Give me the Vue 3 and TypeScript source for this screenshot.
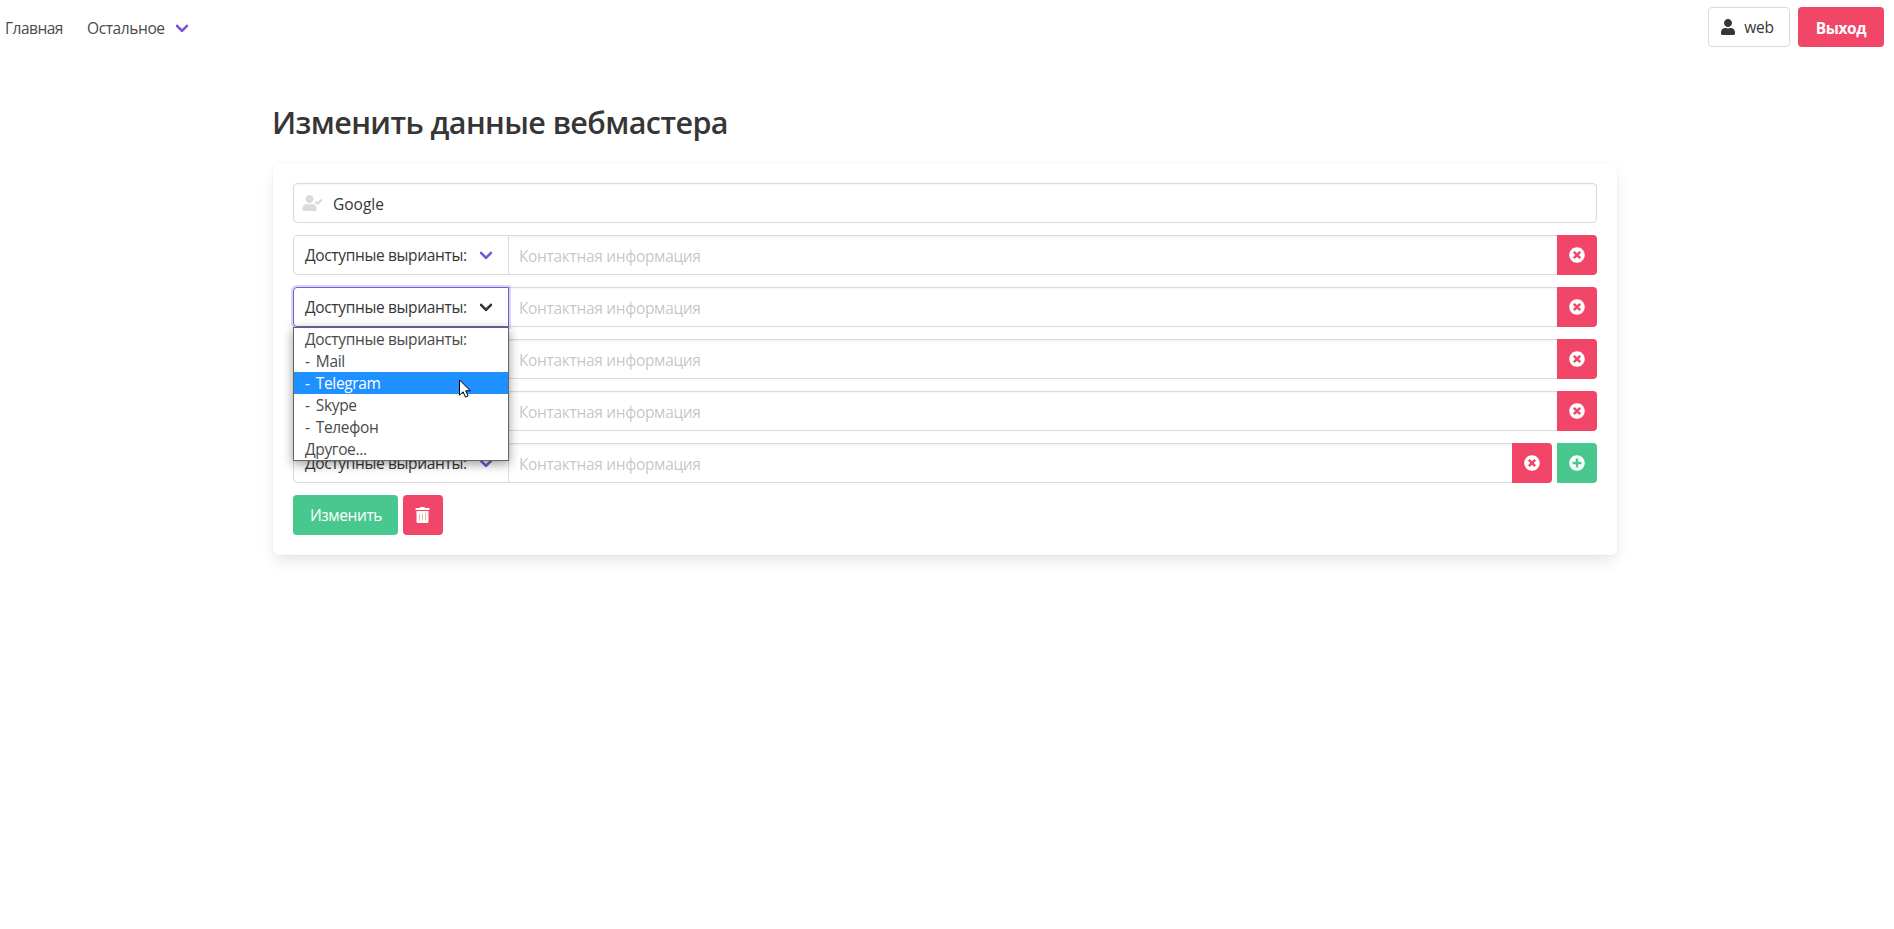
<script setup lang="ts">
import { ref } from 'vue'

interface ContactRow {
  id: number
  value: string
}

const icons = {
  user: 'M224 256c70.7 0 128-57.3 128-128S294.7 0 224 0 96 57.3 96 128s57.3 128 128 128zm89.6 32h-16.7c-22.2 10.2-46.9 16-72.9 16s-50.6-5.8-72.9-16h-16.7C60.2 288 0 348.2 0 422.4V464c0 26.5 21.5 48 48 48h352c26.5 0 48-21.5 48-48v-41.6c0-74.2-60.2-134.4-134.4-134.4z',
  check: 'M636.6 159.6l-27.8-28.1c-4.6-4.7-12.1-4.7-16.8-.1l-104.8 104-45.5-45.8c-4.6-4.7-12.1-4.7-16.8-.1l-28.1 27.9c-4.7 4.6-4.7 12.1-.1 16.8l81.7 82.3c4.6 4.7 12.1 4.7 16.8.1l141.3-140.2c4.6-4.7 4.7-12.2.1-16.8z',
  remove: 'M256 8C119 8 8 119 8 256s111 248 248 248 248-111 248-248S393 8 256 8zm121.6 313.1c4.7 4.7 4.7 12.3 0 17L338 377.6c-4.7 4.7-12.3 4.7-17 0L256 312l-65.1 65.6c-4.7 4.7-12.3 4.7-17 0L134.4 338c-4.7-4.7-4.7-12.3 0-17l65.6-65-65.6-65.1c-4.7-4.7-4.7-12.3 0-17l39.6-39.6c4.7-4.7 12.3-4.7 17 0l65 65.7 65.1-65.6c4.7-4.7 12.3-4.7 17 0l39.6 39.6c4.7 4.7 4.7 12.3 0 17L312 256l65.6 65.1z',
  add: 'M256 8C119 8 8 119 8 256s111 248 248 248 248-111 248-248S393 8 256 8zm144 276c0 6.6-5.4 12-12 12h-92v92c0 6.6-5.4 12-12 12h-56c-6.6 0-12-5.4-12-12v-92h-92c-6.6 0-12-5.4-12-12v-56c0-6.6 5.4-12 12-12h92v-92c0-6.6 5.4-12 12-12h56c6.6 0 12 5.4 12 12v92h92c6.6 0 12 5.4 12 12v56z',
  trash: 'M32 464a48 48 0 0 0 48 48h288a48 48 0 0 0 48-48V128H32zM432 32H312l-9.4-18.7A24 24 0 0 0 281.1 0H166.8a23.72 23.72 0 0 0-21.4 13.3L136 32H16A16 16 0 0 0 0 48v32a16 16 0 0 0 16 16h416a16 16 0 0 0 16-16V48a16 16 0 0 0-16-16z',
  slots: 'M128 208v224M224 208v224M320 208v224',
}

const name = ref('Google')
const options: string[] = ['Доступные вырианты:', '- Mail', '- Telegram', '- Skype', '- Телефон', 'Другое...']
const activeOption = ref(2)
const openRow = ref(1)
const rows = ref<ContactRow[]>([1, 2, 3, 4, 5].map((id) => ({ id, value: '' })))

function addRow() {
  rows.value.push({ id: Math.max(0, ...rows.value.map((r) => r.id)) + 1, value: '' })
}

function removeRow(index: number) {
  rows.value.splice(index, 1)
}
</script>

<template>
  <div class="page">
    <nav class="navbar">
      <a class="nav-link home">Главная</a>
      <a class="nav-link more">
        <span>Остальное</span>
        <i class="chevron"></i>
      </a>
      <div class="nav-end">
        <button class="button account">
          <svg class="user-icon" viewBox="0 0 448 512"><path :d="icons.user" /></svg>
          <span>web</span>
        </button>
        <button class="button danger logout"><span>Выход</span></button>
      </div>
    </nav>

    <main class="container">
      <h1 class="title">Изменить данные вебмастера</h1>
      <form class="box" @submit.prevent>
        <div class="name-field">
          <svg class="name-icon" viewBox="0 0 640 512">
            <path :d="icons.user" />
            <path :d="icons.check" />
          </svg>
          <input v-model="name" class="input" type="text" />
        </div>

        <div v-for="(row, index) in rows" :key="row.id" class="row">
          <div class="select" :class="{ open: index === openRow }" @click="openRow = index">
            <span class="select-text">{{ options[0] }}</span>
            <i class="chevron"></i>
            <ul v-if="index === openRow" class="menu">
              <li
                v-for="(option, i) in options"
                :key="option"
                :class="{ active: i === activeOption, nested: option.startsWith('-') }"
                @mouseenter="activeOption = i"
              >
                <span>{{ option }}</span>
              </li>
              <svg class="pointer" viewBox="0 0 12 19">
                <path d="M.5.9v15.3l3.6-3.4 2.4 5.3 2.6-1.1-2.4-5.2h4.6z" />
              </svg>
            </ul>
          </div>
          <input v-model="row.value" class="input contact" type="text" placeholder="Контактная информация" />
          <button class="button danger square joined" type="button" @click="removeRow(index)">
            <svg class="round-icon" viewBox="0 0 512 512"><path :d="icons.remove" /></svg>
          </button>
          <button
            v-if="index === rows.length - 1"
            class="button success square joined add"
            type="button"
            @click="addRow"
          >
            <svg class="round-icon" viewBox="0 0 512 512"><path :d="icons.add" /></svg>
          </button>
        </div>

        <div class="actions">
          <button class="button success submit"><span>Изменить</span></button>
          <button class="button danger square" type="button">
            <svg class="trash-icon" viewBox="0 0 448 512">
              <path :d="icons.trash" />
              <path class="slots" :d="icons.slots" />
            </svg>
          </button>
        </div>
      </form>
    </main>
  </div>
</template>

<style>
html,
body {
  margin: 0;
  background: #fff;
  overflow: hidden;
}
</style>

<style scoped>
* {
  box-sizing: border-box;
}

.page,
.input,
.button {
  font-family: 'Open Sans', 'Noto Sans', sans-serif;
  font-size: 15.5px;
  font-weight: 400;
  line-height: 24px;
}

.page {
  min-height: 929px;
  color: #4a4a4a;
}

.navbar {
  display: flex;
  align-items: center;
  height: 54px;
  padding: 0 10px 0 5px;
}

.nav-link {
  display: flex;
  align-items: center;
  padding-top: 1px;
  white-space: nowrap;
}

.home {
  width: 82px;
  letter-spacing: -0.5px;
}

.more {
  letter-spacing: -0.4px;
}

.more .chevron {
  margin-left: 12px;
}

.nav-end {
  display: flex;
  gap: 8px;
  margin-left: auto;
}

.chevron {
  flex: none;
  width: 10px;
  height: 10px;
  border: 3px solid #7957d5;
  border-top: 0;
  border-right: 0;
  border-radius: 2px;
  transform: translateY(-2px) rotate(-45deg);
}

.button {
  display: flex;
  flex: none;
  align-items: center;
  justify-content: center;
  height: 40px;
  padding: 0;
  border: 0;
  border-radius: 4px;
  color: #fff;
}

.button svg {
  fill: currentColor;
}

.account {
  gap: 9px;
  width: 82px;
  padding-right: 3px;
  border: 1px solid #dbdbdb;
  background: #fff;
  color: #363636;
  letter-spacing: -0.2px;
}

.user-icon {
  width: 14px;
  height: 16px;
}

.logout {
  width: 86px;
  padding-top: 1px;
  font-weight: 700;
  letter-spacing: -0.4px;
}

.danger {
  background: #f14668;
}

.success {
  background: #48c78e;
}

.square {
  width: 40px;
  padding-right: 1px;
}

.joined {
  border-radius: 0 4px 4px 0;
}

.add {
  margin-left: 5px;
}

.round-icon {
  width: 16px;
  height: 16px;
}

.trash-icon {
  width: 15px;
  height: 16px;
}

.trash-icon .slots {
  stroke: #f9b4a8;
  stroke-width: 32;
}

.container {
  width: 1344px;
  margin: 0 auto;
  transform: translateX(-2px);
}

.title {
  height: 36px;
  margin: 50px 0 23px;
  color: #363636;
  font-size: 30.5px;
  font-weight: 600;
  line-height: 36px;
  letter-spacing: -0.6px;
  white-space: nowrap;
  text-indent: -1px;
}

.box {
  display: flex;
  flex-direction: column;
  gap: 12px;
  padding: 20px;
  border-radius: 6px;
  background: #fff;
  box-shadow: 0 8px 16px -2px rgba(10, 10, 10, 0.1), 0 0 0 1px rgba(10, 10, 10, 0.02);
}

.name-field {
  position: relative;
  display: flex;
}

.name-icon {
  position: absolute;
  top: 12px;
  left: 9px;
  width: 21px;
  height: 16px;
  fill: #dbdbdb;
}

.input {
  flex: 1;
  min-width: 0;
  height: 40px;
  padding: 2px 11px 0;
  border: 1px solid #dbdbdb;
  border-radius: 4px;
  outline: 0;
  background: #fff;
  box-shadow: inset 0 1px 2px rgba(10, 10, 10, 0.05);
  color: #363636;
}

.name-field .input {
  padding-left: 39px;
}

.row {
  display: flex;
}

.contact {
  margin-left: -1px;
  padding-left: 10px;
  border-right: 0;
  border-radius: 0;
  letter-spacing: -0.33px;
}

.contact::placeholder {
  color: rgba(54, 54, 54, 0.3);
  opacity: 1;
}

.select {
  position: relative;
  display: flex;
  flex: none;
  align-items: center;
  justify-content: space-between;
  width: 216px;
  height: 40px;
  padding: 0 17px 0 11px;
  border: 1px solid #dbdbdb;
  border-radius: 4px 0 0 4px;
  color: #363636;
  letter-spacing: -0.35px;
  white-space: nowrap;
}

.select.open {
  z-index: 4;
  border-color: #7957d5;
  box-shadow: 0 0 0 2px rgba(121, 87, 213, 0.25);
}

.open .chevron {
  border-color: #363636;
}

.menu {
  position: absolute;
  top: 39px;
  left: -1px;
  width: 216px;
  margin: 0;
  padding: 0;
  border: 1px solid #646464;
  background: #fff;
  box-shadow: 0 3px 10px rgba(0, 0, 0, 0.4);
  color: #4a4a4a;
  list-style: none;
}

.menu li {
  height: 22px;
  padding-left: 11px;
  line-height: 23px;
}

.menu .nested {
  word-spacing: 2.5px;
  letter-spacing: -0.35px;
}

.menu .active {
  background: #1e90ff;
  color: #fff;
}

.pointer {
  position: absolute;
  top: 51px;
  left: 165px;
  width: 12px;
  height: 19px;
  fill: #fff;
  stroke: #000;
}

.actions {
  display: flex;
  gap: 5px;
}

.submit {
  width: 105px;
  padding-left: 1px;
  letter-spacing: -0.4px;
}
</style>
